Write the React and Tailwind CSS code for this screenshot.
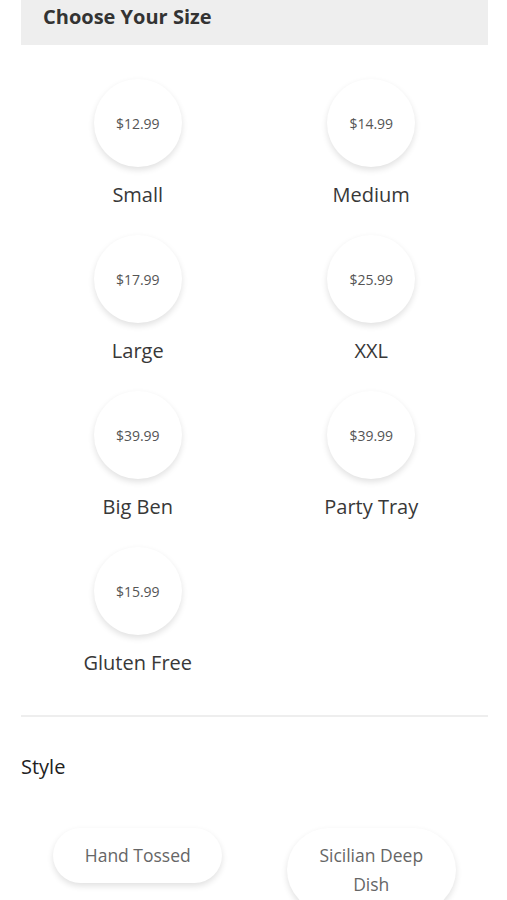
import React from "react";

const sizes = [
  { price: "$12.99", name: "Small" },
  { price: "$14.99", name: "Medium" },
  { price: "$17.99", name: "Large" },
  { price: "$25.99", name: "XXL" },
  { price: "$39.99", name: "Big Ben" },
  { price: "$39.99", name: "Party Tray" },
  { price: "$15.99", name: "Gluten Free" },
];

export default function App() {
  return (
    <div className="bg-white h-[900px] overflow-hidden pl-[21px] pr-[19px]" style={{ fontFamily: '"Open Sans", sans-serif' }}>
      <div className="bg-[#eeeeee] h-[45px] pl-[22px] pt-[3px]">
        <h2 className="text-[20px] leading-[28px] font-bold text-[#333333]">Choose Your Size</h2>
      </div>
      <div className="grid grid-cols-2 gap-y-[26px] mt-[34px]">
        {sizes.map((s, i) => (
          <div key={i} className="flex flex-col items-center">
            <div className="w-[88px] h-[88px] rounded-full bg-white shadow-[0_3px_6px_rgba(0,0,0,0.12)] flex items-center justify-center">
              <span className="text-[14px] text-[#555555]">{s.price}</span>
            </div>
            <div className="mt-[14px] text-[20px] leading-[28px] text-[#383838]">{s.name}</div>
          </div>
        ))}
      </div>
      <div className="mt-[38px] border-t-2 border-[#eeeeee]"></div>
      <div className="mt-[36px] text-[20px] leading-[28px] text-[#222222]">Style</div>
      <div className="grid grid-cols-2 mt-[47px] items-start">
        <div className="flex justify-center">
          <div className="w-[169px] rounded-full bg-white shadow-[0_3px_6px_rgba(0,0,0,0.12)] py-[13px] px-[20px] text-center text-[17.5px] leading-[29px] text-[#666666]">Hand Tossed</div>
        </div>
        <div className="flex justify-center">
          <div className="w-[169px] rounded-full bg-white shadow-[0_3px_6px_rgba(0,0,0,0.12)] py-[13px] px-[20px] text-center text-[17.5px] leading-[29px] text-[#666666]">Sicilian Deep Dish</div>
        </div>
      </div>
    </div>
  );
}
